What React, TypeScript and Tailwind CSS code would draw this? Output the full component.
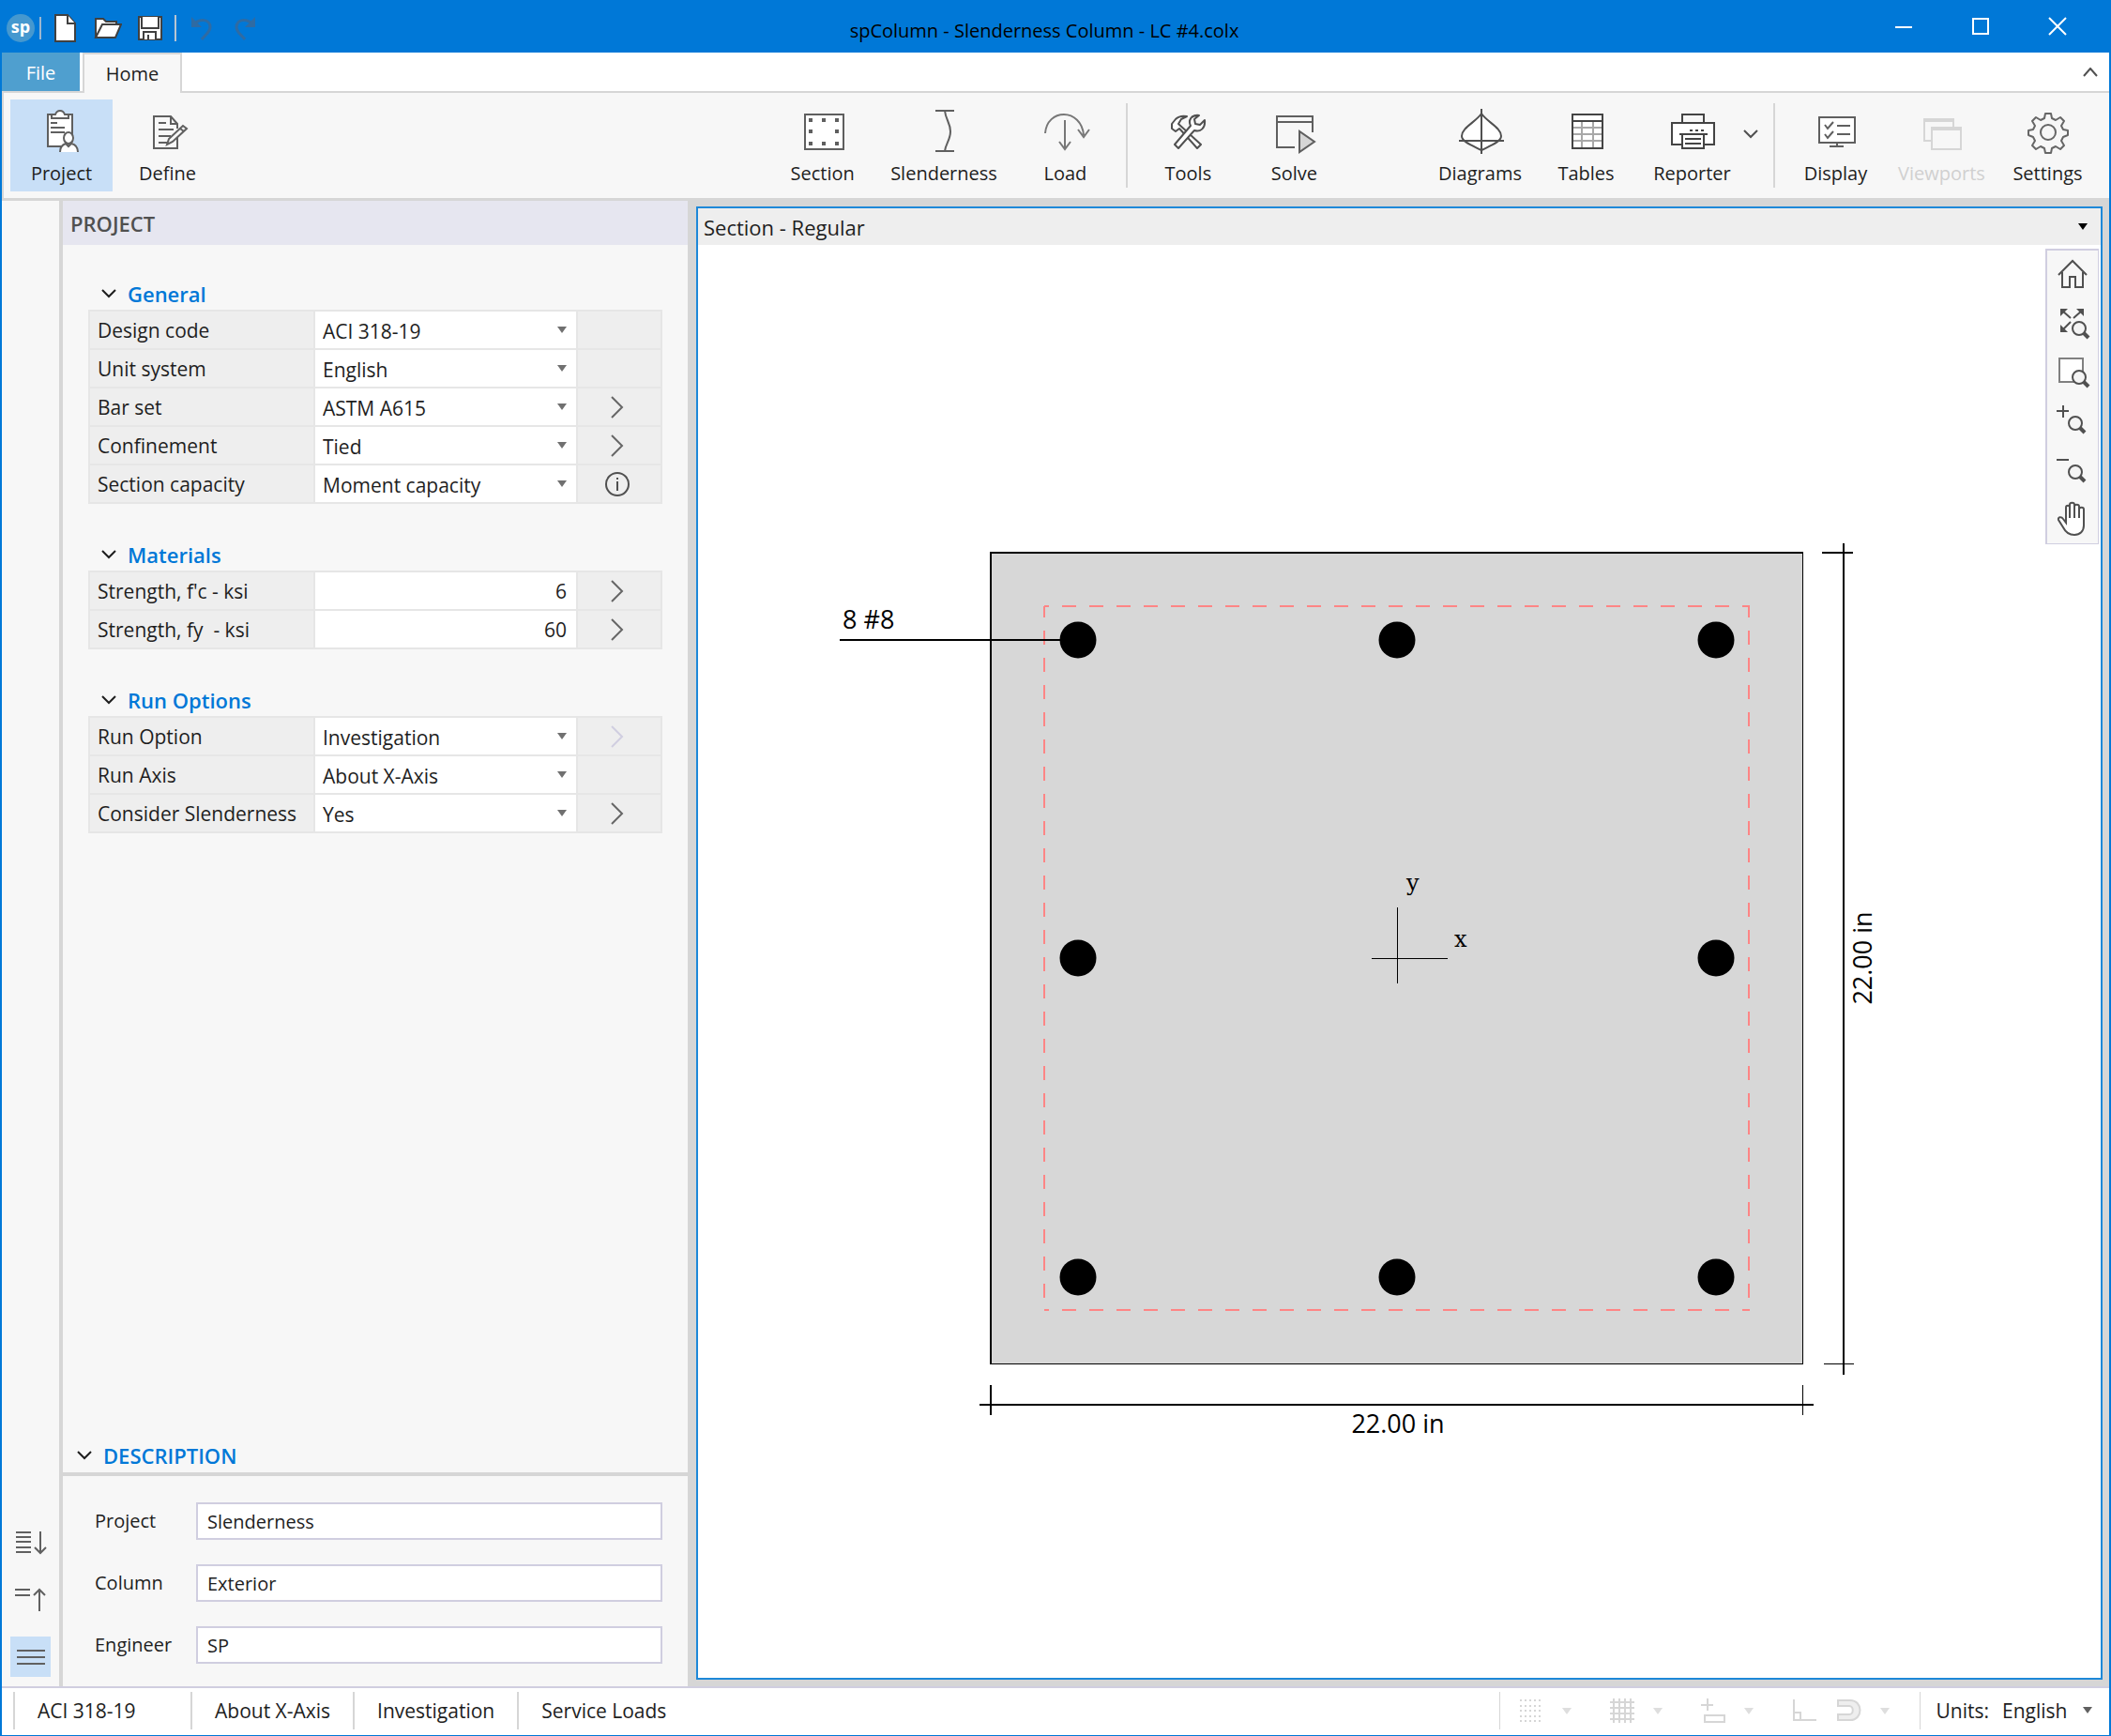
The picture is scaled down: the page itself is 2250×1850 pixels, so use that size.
import { useState } from 'react';
import type { ReactNode } from 'react';
import clsx from 'clsx';

interface RibbonButtonProps {
  label: string;
  icon: ReactNode;
  active?: boolean;
  disabled?: boolean;
  wide?: boolean;
}

interface PropertyRowProps {
  id: string;
  label: string;
  action?: 'open' | 'open-disabled' | 'info';
  children: ReactNode;
}

const BAR_POSITIONS = [
  [405, 421], [745, 421], [1085, 421],
  [405, 760], [1085, 760],
  [405, 1100], [745, 1100], [1085, 1100],
];

/* ---------- Icons ---------- */

function RibbonIcon({ children, color = '#5f5f5f' }: { children: ReactNode; color?: string }) {
  return (
    <svg width="48" height="48" viewBox="0 0 48 48" fill="none" stroke={color} strokeWidth="2" overflow="visible">
      {children}
    </svg>
  );
}

const projectIcon = (
  <RibbonIcon>
    <rect x="9" y="6" width="26" height="34" fill="#fff" />
    <path d="M13 10V6h4c1-3 3-4 5-4s4 1 5 4h4v4z" fill="#fff" />
    <path d="M12 15h7M12 20h15M12 25h15" />
    <path d="M22 46c0-6 3-9 5-10-3-2-3-11 4-11s7 9 4 11c3 1 6 4 6 10z" fill="#fff" stroke="none" />
    <ellipse cx="31" cy="31" rx="5" ry="6" fill="#fff" />
    <path d="M22 46c0-5 3-8 6-9l3 3 3-3c4 1 7 4 7 9" />
  </RibbonIcon>
);

const defineIcon = (
  <RibbonIcon>
    <path d="M34 28v14H9V8h18l7 8v5" />
    <path d="M27 8v8h7M14 15h8M14 22h16M14 29h13M14 36h9" />
    <path d="M23 38l2-6 15-14 4 3-15 14zM37 21l4 3" fill="#f7f7f7" />
  </RibbonIcon>
);

const sectionIcon = (
  <RibbonIcon>
    <rect x="5" y="6" width="41" height="37" fill="#fff" />
    <path
      d="M9 10h4v4H9zM23 10h4v4h-4zM37 10h4v4h-4zM9 22h4v4H9zM37 22h4v4h-4zM9 35h4v4H9zM23 35h4v4h-4zM37 35h4v4h-4z"
      fill="#5f5f5f"
      stroke="none"
    />
  </RibbonIcon>
);

const slendernessIcon = (
  <RibbonIcon>
    <path d="M15 2h20M15 45h20M25 2c1 10 6 13 6 22s-5 13-6 21" />
  </RibbonIcon>
);

const loadIcon = (
  <RibbonIcon color="#777">
    <path d="M3 26C4 13 13 6 23 6s20 8 21 22M38 22l6 8 6-8M24 12v31M18 35l6 8 6-8" />
  </RibbonIcon>
);

const toolsIcon = (
  <RibbonIcon color="#505050">
    <path d="M34 42l4-4-24-22 3-5 6-3c-6-1-9 0-12 3l-4 5v5l4 3 4-3 1 1z" fill="#fff" strokeLinejoin="round" />
    <path d="M10 38l4 4 17-19c6 2 12-2 11-11l-5 5-5-1-1-5 5-4c-8-1-12 5-9 11z" fill="#fff" strokeLinejoin="round" />
  </RibbonIcon>
);

const solveIcon = (
  <RibbonIcon>
    <path d="M25 41H6V8h38v17M6 14h38" />
    <path d="M30 24v22l16-11z" fill="#d6d6d6" />
  </RibbonIcon>
);

const diagramsIcon = (
  <RibbonIcon color="#505050">
    <path d="M25 5C19 14 4 20 4 29c0 6 11 10 21 15 10-5 21-9 21-15 0-9-15-15-21-24z" fill="#fff" />
    <path d="M25 0v48M1 34h48" />
  </RibbonIcon>
);

const tablesIcon = (
  <RibbonIcon color="#444">
    <rect x="9" y="6" width="32" height="36" fill="#fff" />
    <path d="M19 13v28M31 13v28M10 20h30M10 27h30M10 34h30" stroke="#a8a8a8" />
    <path d="M9 13h32" />
  </RibbonIcon>
);

const reporterIcon = (
  <RibbonIcon color="#444">
    <path d="M13 14V6h23v8" />
    <path d="M13 38H2V15h45v23H36" fill="#fff" />
    <path d="M13 27v15h23V27" fill="#fff" />
    <path d="M10 27h30M16 32h17M16 37h17M21 23h3M27 23h3M33 23h3" />
  </RibbonIcon>
);

const displayIcon = (
  <RibbonIcon>
    <rect x="6" y="9" width="38" height="27" fill="#fff" />
    <path d="M25 36v4M17 40h15M25 18h14M25 27h14" />
    <path d="M12 17l3 4 6-7M12 27l3 4 6-7" />
  </RibbonIcon>
);

const viewportsIcon = (
  <RibbonIcon color="#d6d6d6">
    <path d="M12 34H5V11h31v8M5 13h31" />
    <path d="M13 20h31v23H13zM13 22h31" fill="#f7f7f7" />
  </RibbonIcon>
);

const settingsIcon = (
  <RibbonIcon color="#666">
    <path
      d="M21 5h6l1 5 4 2 5-3 4 4-3 5 2 4 5 1v5l-5 2-2 4 3 5-4 4-5-3-4 2-1 5h-6l-1-5-4-2-5 3-4-4 3-5-2-4-5-2v-5l5-1 2-4-3-5 4-4 5 3 4-2z"
      strokeLinejoin="round"
    />
    <circle cx="24" cy="25" r="8" />
  </RibbonIcon>
);

function Triangle({ className }: { className?: string }) {
  return (
    <svg width="10" height="7" viewBox="0 0 10 7" className={className}>
      <path d="M0 0h10L5 7z" fill="currentColor" />
    </svg>
  );
}

function Chevron({ up = false }: { up?: boolean }) {
  return (
    <svg width="16" height="10" viewBox="0 0 16 10" fill="none" stroke="currentColor" strokeWidth="2">
      <path d={up ? 'M1 9l7-8 7 8' : 'M1 1l7 7 7-7'} />
    </svg>
  );
}

function Magnifier({ x, y }: { x: number; y: number }) {
  return (
    <g transform={`translate(${x} ${y})`}>
      <circle r="7" fill="#f4f4f4" strokeWidth="2" />
      <path d="M5 5l5 5" strokeWidth="4" />
    </g>
  );
}

/* ---------- Title bar and ribbon ---------- */

function TitleBar() {
  return (
    <header className="grid h-14 grid-cols-[1fr_auto_1fr] items-center bg-[#0078d7]">
      <div className="flex items-center pl-1 pt-1">
        <svg width="32" height="32" viewBox="0 0 32 32" role="img" aria-label="spColumn">
          <circle cx="16" cy="16" r="15" fill="#4598cf" />
          <text x="16" y="21" textAnchor="middle" fontSize="18" fontWeight="700" fill="#fff">sp</text>
        </svg>
        <span className="ml-1 h-6 w-0.5 bg-[#9db7cf]" />
        <button type="button" aria-label="New" className="ml-3.5">
          <svg width="24" height="30" viewBox="0 0 24 30" fill="#fff" stroke="#404040" strokeWidth="2">
            <path d="M1 1h13l8 9v19H1z" />
            <path d="M14 1v9h8" />
          </svg>
        </button>
        <button type="button" aria-label="Open" className="ml-4.5">
          <svg width="30" height="24" viewBox="0 0 30 24" fill="#fff" stroke="#404040" strokeWidth="2">
            <path d="M2 22V2h8l3 3h11v5" />
            <path d="M2 22l7-14h20l-6 14z" />
          </svg>
        </button>
        <button type="button" aria-label="Save" className="ml-4">
          <svg width="28" height="28" viewBox="0 0 28 28" fill="#fff" stroke="#404040" strokeWidth="2">
            <path d="M2 2h24v24H2z" />
            <path d="M5 2v12h18V2M7 26v-8h13v8M12 21v5" />
          </svg>
        </button>
        <span className="ml-3 h-7 w-0.5 bg-[#b9c6d2]" />
        <button type="button" aria-label="Undo" disabled className="ml-3.5">
          <svg width="26" height="28" viewBox="0 0 26 28" fill="none" stroke="#2f6ba3" strokeWidth="3">
            <path d="M4 11c6-8 18-7 18 2 0 5-4 7-9 13" />
            <path d="M2 2v11h11z" fill="#2f6ba3" stroke="none" />
          </svg>
        </button>
        <button type="button" aria-label="Redo" disabled className="ml-5">
          <svg width="26" height="28" viewBox="0 0 26 28" fill="none" stroke="#2f6ba3" strokeWidth="3">
            <path d="M22 11c-6-8-18-7-18 2 0 5 4 7 9 13" />
            <path d="M24 2v11H13z" fill="#2f6ba3" stroke="none" />
          </svg>
        </button>
      </div>
      <h1 className="pr-6 pt-2.5 text-black">spColumn - Slenderness Column - LC #4.colx</h1>
      <div className="flex justify-end pr-3.5 text-white">
        <button type="button" aria-label="Minimize" className="flex w-[82px] justify-center">
          <svg width="20" height="20" viewBox="0 0 20 20" fill="none" stroke="currentColor" strokeWidth="2">
            <path d="M1 11h18" />
          </svg>
        </button>
        <button type="button" aria-label="Maximize" className="flex w-[82px] justify-center">
          <svg width="20" height="20" viewBox="0 0 20 20" fill="none" stroke="currentColor" strokeWidth="2">
            <path d="M2 2h16v16H2z" />
          </svg>
        </button>
        <button type="button" aria-label="Close" className="flex w-[82px] justify-center">
          <svg width="20" height="20" viewBox="0 0 20 20" fill="none" stroke="currentColor" strokeWidth="2">
            <path d="M1 1l18 18M19 1L1 19" />
          </svg>
        </button>
      </div>
    </header>
  );
}

function Tabs() {
  return (
    <nav className="flex h-[43px] border-b-2 border-[#d6d6d6] bg-white">
      <button type="button" className="w-[83px] bg-[#4f9fcf] pt-0.5 text-white">File</button>
      <button type="button" className="-mb-0.5 ml-[3px] w-[106px] border-2 border-b-0 border-[#d6d6d6] bg-[#f7f7f7]">
        Home
      </button>
      <button type="button" aria-label="Collapse ribbon" className="ml-auto px-3 text-[#505050]">
        <Chevron up />
      </button>
    </nav>
  );
}

function RibbonButton({ label, icon, active, disabled, wide }: RibbonButtonProps) {
  return (
    <button
      type="button"
      disabled={disabled}
      className={clsx(
        'flex min-w-[109px] flex-col items-center gap-[7px] pb-[5px] pt-2.5',
        wide ? 'px-3.5' : 'px-2',
        active && 'bg-[#c8dff7]',
        disabled && 'text-[#d0d0d0]',
      )}
    >
      {icon}
      <span>{label}</span>
    </button>
  );
}

function Ribbon() {
  return (
    <div className="grid grid-cols-[1fr_auto_1fr] border-b-[3px] border-l-2 border-[#d6d6d6] bg-[#f7f7f7] py-[7px] pl-[7px] pr-[11px]">
      <div className="flex gap-1">
        <RibbonButton label="Project" icon={projectIcon} active />
        <RibbonButton label="Define" icon={defineIcon} />
      </div>
      <div className="ml-2 flex items-center gap-1">
        <RibbonButton label="Section" icon={sectionIcon} />
        <RibbonButton label="Slenderness" icon={slendernessIcon} wide />
        <RibbonButton label="Load" icon={loadIcon} />
        <span className="mx-1.5 h-[90px] w-0.5 bg-[#d6d6d6]" />
        <RibbonButton label="Tools" icon={toolsIcon} />
        <RibbonButton label="Solve" icon={solveIcon} />
      </div>
      <div className="flex items-center justify-end gap-1">
        <RibbonButton label="Diagrams" icon={diagramsIcon} />
        <RibbonButton label="Tables" icon={tablesIcon} />
        <div className="flex">
          <RibbonButton label="Reporter" icon={reporterIcon} />
          <button type="button" aria-label="Reporter options" className="pb-6 text-[#505050]">
            <Chevron />
          </button>
        </div>
        <span className="ml-3 mr-1.5 h-[90px] w-0.5 bg-[#d6d6d6]" />
        <RibbonButton label="Display" icon={displayIcon} />
        <RibbonButton label="Viewports" icon={viewportsIcon} disabled />
        <RibbonButton label="Settings" icon={settingsIcon} />
      </div>
    </div>
  );
}

/* ---------- Left side ---------- */

function SideStrip() {
  const button = 'flex size-[43px] items-center justify-center';
  return (
    <div className="flex w-[65px] flex-col items-center justify-end gap-[18px] border-r-4 border-[#d6d6d6] pb-[10px]">
      <button type="button" aria-label="Expand all" className={button}>
        <svg width="34" height="26" viewBox="0 0 34 26" fill="none" stroke="#606060" strokeWidth="2">
          <path d="M1 2h16M1 7h16M1 12h16M1 18h16M1 23h16M27 1v23M21 18l6 6 6-6" />
        </svg>
      </button>
      <button type="button" aria-label="Collapse all" className={button}>
        <svg width="34" height="26" viewBox="0 0 34 26" fill="none" stroke="#606060" strokeWidth="2">
          <path d="M0 2h16M0 8h16M26 25V2M20 8l6-6 6 6" />
        </svg>
      </button>
      <button type="button" aria-label="Show all" className={clsx(button, 'bg-[#c8dff7]')}>
        <svg width="30" height="20" viewBox="0 0 30 20" fill="none" stroke="#606060" strokeWidth="2">
          <path d="M0 3h30M0 10h30M0 17h30" />
        </svg>
      </button>
    </div>
  );
}

function PropertyRow({ id, label, action, children }: PropertyRowProps) {
  return (
    <div className="grid h-[41px] grid-cols-[240px_278px_1fr] border-b-2 border-[#e6e6e6]">
      <label htmlFor={id} className="flex items-center border-r-2 border-[#e6e6e6] pl-2">{label}</label>
      <div className="relative bg-white">{children}</div>
      <div className="flex items-center justify-center border-l-2 border-[#e6e6e6] pr-1">
        {(action === 'open' || action === 'open-disabled') && (
          <button
            type="button"
            aria-label={`${label} details`}
            disabled={action === 'open-disabled'}
            className={action === 'open' ? 'text-[#666]' : 'text-[#d0cee0]'}
          >
            <svg width="14" height="24" viewBox="0 0 14 24" fill="none" stroke="currentColor" strokeWidth="2">
              <path d="M1 1l11 11L1 23" />
            </svg>
          </button>
        )}
        {action === 'info' && (
          <button type="button" aria-label={`${label} info`} className="text-[#505050]">
            <svg width="28" height="28" viewBox="0 0 28 28" fill="none" stroke="currentColor" strokeWidth="2">
              <circle cx="14" cy="14" r="12" />
              <path d="M14 11v10M14 7v2" />
            </svg>
          </button>
        )}
      </div>
    </div>
  );
}

function SelectRow({ id, label, action, options }: Omit<PropertyRowProps, 'children'> & { options: string[] }) {
  return (
    <PropertyRow id={id} label={label} action={action}>
      <select id={id} className="size-full appearance-none pl-2 pt-0.5">
        {options.map((o) => <option key={o}>{o}</option>)}
      </select>
      <Triangle className="pointer-events-none absolute right-2.5 top-4 text-[#707070]" />
    </PropertyRow>
  );
}

function NumberRow({ id, label, value }: { id: string; label: string; value: string }) {
  return (
    <PropertyRow id={id} label={label} action="open">
      <input id={id} type="text" defaultValue={value} className="size-full pr-2.5 text-right" />
    </PropertyRow>
  );
}

function PropertyGroup({ title, children }: { title: string; children: ReactNode }) {
  const [open, setOpen] = useState(true);
  return (
    <section>
      <button type="button" onClick={() => setOpen(!open)} className="mb-[3px] flex items-center gap-3 pl-3.5">
        <Chevron up={!open} />
        <span className="text-[22px] font-semibold leading-7 text-[#0078d7]">{title}</span>
      </button>
      {open && (
        <div className="border-2 border-b-0 border-[#e6e6e6] bg-[#eee] text-[21px] leading-7">{children}</div>
      )}
    </section>
  );
}

function DescriptionField({ id, label, value }: { id: string; label: string; value: string }) {
  return (
    <div className="grid grid-cols-[108px_1fr] items-center">
      <label htmlFor={id}>{label}</label>
      <input id={id} type="text" defaultValue={value} className="h-10 border-2 border-[#d0cee0] bg-white px-2.5" />
    </div>
  );
}

function ProjectPanel() {
  return (
    <aside className="flex w-[666px] flex-col">
      <h2 className="flex h-[47px] items-center bg-[#e6e6f0] pl-2 text-[22px] font-semibold leading-7 text-[#505050]">
        PROJECT
      </h2>
      <div className="flex flex-col gap-10 px-[27px] pt-[38px]">
        <PropertyGroup title="General">
          <SelectRow id="design-code" label="Design code" options={['ACI 318-19', 'ACI 318-14']} />
          <SelectRow id="unit-system" label="Unit system" options={['English', 'Metric']} />
          <SelectRow id="bar-set" label="Bar set" action="open" options={['ASTM A615']} />
          <SelectRow id="confinement" label="Confinement" action="open" options={['Tied', 'Spiral']} />
          <SelectRow id="capacity" label="Section capacity" action="info" options={['Moment capacity']} />
        </PropertyGroup>
        <PropertyGroup title="Materials">
          <NumberRow id="fc" label="Strength, f'c - ksi" value="6" />
          <NumberRow id="fy" label={'Strength, fy\u00a0 - ksi'} value="60" />
        </PropertyGroup>
        <PropertyGroup title="Run Options">
          <SelectRow id="run-option" label="Run Option" action="open-disabled" options={['Investigation', 'Design']} />
          <SelectRow id="run-axis" label="Run Axis" options={['About X-Axis', 'About Y-Axis']} />
          <SelectRow id="slender" label="Consider Slenderness" action="open" options={['Yes', 'No']} />
        </PropertyGroup>
      </div>

      <section className="mt-auto">
        <button type="button" className="flex w-full items-center gap-3 border-b-4 border-[#d6d6d6] pb-1 pl-[15px]">
          <Chevron />
          <span className="text-[22px] font-semibold leading-7 text-[#0078d7]">DESCRIPTION</span>
        </button>
        <div className="flex flex-col gap-[26px] pb-6 pl-[34px] pr-[27px] pt-7">
          <DescriptionField id="project" label="Project" value="Slenderness" />
          <DescriptionField id="column" label="Column" value="Exterior" />
          <DescriptionField id="engineer" label="Engineer" value="SP" />
        </div>
      </section>
    </aside>
  );
}

/* ---------- Section view ---------- */

function SectionDrawing() {
  return (
    <svg viewBox="0 0 1495 1527" className="size-full" role="img" aria-label="Column section">
      <g fill="none" stroke="#000" strokeWidth="2" shapeRendering="crispEdges">
        <rect x="312" y="328" width="866" height="865" fill="#d7d7d7" stroke="none" />
        <path d="M312 1192V328H1177" />
        <path d="M1177.5 327V1192.5H311" strokeWidth="1" />

        {/* tie */}
        <g stroke="#ff8585" strokeDasharray="15 14">
          <path d="M369 385H1121M369 1135H1121" strokeDashoffset="10" />
          <path d="M369 385V1136M1120 385V1136" strokeDashoffset="3" />
        </g>

        <path d="M151 421H405" />

        {/* dimensions */}
        <path d="M1221 318V1204M1198 328H1231M300 1236H1189M312 1215V1247" />
        <path d="M1200 1192.5H1232M1177.5 1215V1247" strokeWidth="1" />

        {/* local axes */}
        <path d="M718 760.5H799M745.5 706V787" strokeWidth="1" />
      </g>

      {BAR_POSITIONS.map(([x, y]) => <circle key={`${x}-${y}`} cx={x} cy={y} r="19.5" />)}

      <g fontSize="27">
        <text x="154" y="409">8 #8</text>
        <text x="746" y="1266" textAnchor="middle">22.00 in</text>
        <text transform="translate(1251 760) rotate(-90)" textAnchor="middle">22.00 in</text>
      </g>
      <g fontSize="24" className="font-['DejaVu_Serif',serif]">
        <text x="755" y="688">y</text>
        <text x="806" y="748">x</text>
      </g>
    </svg>
  );
}

function ViewToolbar() {
  const tools = [
    {
      name: 'Home view',
      icon: <path d="M2 18L17 3l15 15M6 15v16h8V20h6v11h8V15" fill="none" strokeWidth="2" />,
    },
    {
      name: 'Zoom extents',
      icon: (
        <>
          <path d="M6 4l9 8M27 4l-9 8M6 25l9-9" strokeWidth="2" />
          <path d="M4 2h8l-8 8zM29 2h-8l8 8zM4 27h8l-8-8z" fill="#505050" stroke="none" />
          <Magnifier x={24} y={23} />
        </>
      ),
    },
    {
      name: 'Zoom window',
      icon: (
        <>
          <path d="M3 3h25v25H3z" fill="#fff" stroke="#808080" strokeWidth="2" />
          <Magnifier x={24} y={23} />
        </>
      ),
    },
    {
      name: 'Zoom in',
      icon: (
        <>
          <path d="M0 7h13M7 1v13" strokeWidth="2" />
          <Magnifier x={20} y={20} />
        </>
      ),
    },
    {
      name: 'Zoom out',
      icon: (
        <>
          <path d="M0 7h13" strokeWidth="2" />
          <Magnifier x={20} y={20} />
        </>
      ),
    },
    {
      name: 'Pan',
      icon: (
        <path
          d="M10 22V6c0-3 4-3 4 0V3c0-3 5-3 5 0v2c0-3 5-3 5 0v3c0-3 5-3 5 0v17c0 6-4 10-10 10S9 31 7 27l-5-8c-1-3 3-4 5-1zM14 6v11M19 5v12M24 7v10"
          fill="#fff"
          strokeWidth="2"
        />
      ),
    },
  ];

  return (
    <div className="absolute right-0.5 top-1 flex flex-col border-2 border-b border-r border-[#d0cee0] bg-[#f7f7f7]">
      {tools.map(({ name, icon }) => (
        <button key={name} type="button" aria-label={name} className="flex h-[52px] w-[54px] items-center justify-center">
          <svg width="34" height="36" viewBox="0 0 34 36" stroke="#505050" fill="none" overflow="visible">
            {icon}
          </svg>
        </button>
      ))}
    </div>
  );
}

function SectionView() {
  return (
    <main className="mb-[7px] ml-[9px] mr-[7px] mt-1.5 flex min-w-0 flex-1 flex-col border-2 border-[#1e88d8] bg-white">
      <div className="flex h-[39px] items-center justify-between bg-[#eee] pl-1.5 pr-3.5">
        <h2 className="text-[22px] leading-7">Section - Regular</h2>
        <button type="button" aria-label="View menu" className="text-black">
          <Triangle />
        </button>
      </div>
      <div className="relative min-h-0 flex-1">
        <SectionDrawing />
        <ViewToolbar />
      </div>
    </main>
  );
}

/* ---------- Status bar ---------- */

function StatusTool({ name, menu = true, children }: { name: string; menu?: boolean; children: ReactNode }) {
  return (
    <button type="button" aria-label={name} disabled className="flex items-center gap-5 text-[#dedede]">
      <svg width="26" height="26" viewBox="0 0 26 26" fill="none" stroke="#d6d6d6" strokeWidth="2">
        {children}
      </svg>
      {menu && <Triangle />}
    </button>
  );
}

function StatusBar() {
  const cell = 'flex items-center border-l-2 border-[#d6d6d6] px-6';
  return (
    <footer className="flex h-[52px] border-t-2 border-[#d0cee0] bg-white pb-1.5 pl-3 pt-1 text-[21px] leading-7">
      <span className={clsx(cell, 'min-w-[189px]')}>ACI 318-19</span>
      <span className={cell}>About X-Axis</span>
      <span className={cell}>Investigation</span>
      <span className={cell}>Service Loads</span>
      <div className="ml-auto flex items-center gap-[41px] border-l border-[#d6d6d6] pl-5 pr-8">
        <StatusTool name="Snap points">
          <path d="M1 2h24M1 8h24M1 13h24M1 19h24M1 24h24" strokeDasharray="2 3" />
        </StatusTool>
        <StatusTool name="Grid">
          <path d="M0 4h26M0 10h26M0 16h26M0 22h26M4 0v26M10 0v26M16 0v26M22 0v26" />
        </StatusTool>
        <StatusTool name="Dynamic input">
          <path d="M0 7h13M7 0v13M4 18h21v7H4z" />
        </StatusTool>
        <div className="flex gap-[22px]">
          <StatusTool name="Ortho" menu={false}>
            <path d="M2 1v22h24M2 15h7v8" />
          </StatusTool>
          <StatusTool name="Object snap">
            <path d="M1 2h13c14 0 14 21 0 21H1v-6h12c5 0 5-9 0-9H1z" fill="#eee" />
          </StatusTool>
        </div>
      </div>
      <div className="flex items-center border-l border-[#d6d6d6] pl-[17px] pr-4">
        <label htmlFor="units">Units:</label>
        <div className="relative">
          <select id="units" className="w-28 appearance-none pl-3.5">
            <option>English</option>
            <option>Metric</option>
          </select>
          <Triangle className="pointer-events-none absolute right-0.5 top-2.5 text-[#606060]" />
        </div>
      </div>
    </footer>
  );
}

export default function App() {
  return (
    <div className="flex h-screen flex-col border-x-2 border-b border-[#0078d7] bg-[#f7f7f7] font-['Open_Sans',sans-serif] text-xl text-[#1e1e1e]">
      <TitleBar />
      <Tabs />
      <Ribbon />
      <div className="flex min-h-0 flex-1">
        <SideStrip />
        <ProjectPanel />
        <div className="flex min-w-0 flex-1 bg-[#d6d6d6]">
          <SectionView />
        </div>
      </div>
      <StatusBar />
    </div>
  );
}
